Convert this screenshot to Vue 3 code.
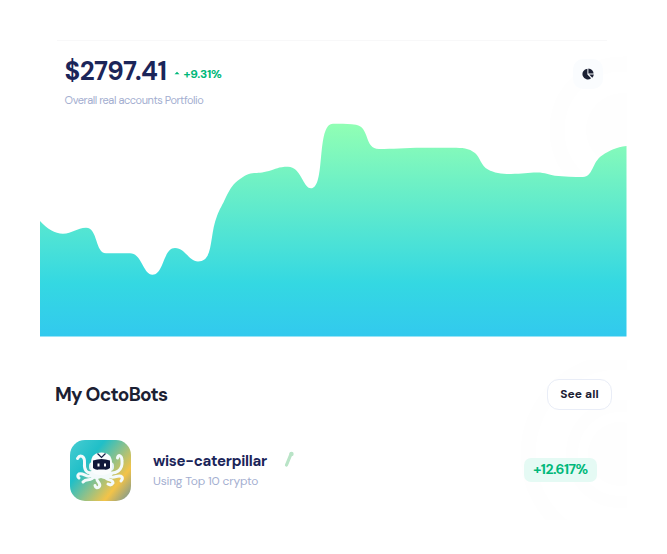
<script setup>
const balance = '$2797.41'
const change = '+9.31%'
const bot = { name: 'wise-caterpillar', strategy: 'Using Top 10 crypto', profit: '+12.617%' }
</script>

<template>
  <main class="page">
    <section class="portfolio">
      <svg class="rings" viewBox="0 0 80 150" aria-hidden="true">
        <circle cx="76" cy="75" r="66" fill="none" stroke="#fefefe" stroke-width="15" />
        <circle cx="76" cy="75" r="37" fill="#fefefe" />
      </svg>
      <header class="summary">
        <div class="figures">
          <div class="amount-row">
            <span class="amount">{{ balance }}</span>
            <svg class="caret" viewBox="0 0 6 4"><path d="M.5 3.3L3 .8L5.500 3.300Z" fill="#00b87a" /></svg>
            <span class="change">{{ change }}</span>
          </div>
          <p class="caption">Overall real accounts Portfolio</p>
        </div>
        <button class="pie" aria-label="Distribution">
          <svg viewBox="0 0 12 12" fill="#1b2033">
            <path d="M5.400 .8V6.400L9.100 10.200A5.300 5.300 0 1 1 5.400 .8Z" />
            <path d="M6.400 .4A5.400 5.400 0 0 1 11.600 5.600H6.400Z" />
            <path d="M7.200 6.600H11.800A5 5 0 0 1 10.300 9.700Z" />
          </svg>
        </button>
      </header>
      <svg class="chart" viewBox="40 118 587 219">
        <defs>
          <linearGradient id="area" gradientUnits="userSpaceOnUse" x1="0" y1="123" x2="0" y2="337">
            <stop offset="0" stop-color="#91ffb4" />
            <stop offset=".75" stop-color="#34d8e2" />
            <stop offset="1" stop-color="#32c9ee" />
          </linearGradient>
        </defs>
        <path fill="url(#area)" d="M40 221C47 229 55 233.7 63 233.7C72 233.7 77 227.7 86 227.7C98 227.7 95 253.3 106 253.3H130C142 253.3 143 274.7 152.500 274.700C164 274.700 163 248 175 248C185 248 189 261.500 198 261.500C214 261.500 209 236 217 216C220 208 222 206 226 197C231 187 233 184 240 179C252 170 254 175 269 171C276 169 278 166.700 288 166.700C301 166.700 303 188.300 311 188.300C326 188.300 316 123.700 333 123.700C341 123.500 349 123.700 356 124.700C370 127 364 149 379 149C393 149 404 147.700 423 147.700H453C462 147.700 469 148 475 153C480 157 481 166 488 169.500C494 173 502 174 511 174C522 174 528 172.600 537 172.600C546 172.600 548 175 555 175.800C564 176.700 574 177 583 177C593 177 592 162 602 155.500C610 150 616 147.500 626.500 146V336.500H40Z" />
      </svg>
    </section>

    <section class="bots">
      <svg class="rings" viewBox="0 0 110 160" aria-hidden="true">
        <circle cx="103" cy="94" r="92" fill="none" stroke="#fefefe" stroke-width="15" />
        <circle cx="103" cy="94" r="48" fill="none" stroke="#fefefe" stroke-width="12" />
        <circle cx="103" cy="94" r="32" fill="#fefefe" />
      </svg>
      <header class="bots-head">
        <h2>My OctoBots</h2>
        <button class="see-all">See all</button>
      </header>
      <article class="bot">
        <svg class="avatar" viewBox="0 0 61 61">
          <defs>
            <linearGradient id="tile" x1="0" y1=".1" x2="1" y2=".9">
              <stop offset="0" stop-color="#43cbd0" />
              <stop offset=".3" stop-color="#20bfc8" />
              <stop offset=".55" stop-color="#8fc18a" />
              <stop offset=".78" stop-color="#f3c348" />
              <stop offset="1" stop-color="#849c8c" />
            </linearGradient>
          </defs>
          <rect width="61" height="61" rx="15" fill="url(#tile)" />
          <g fill="none" stroke="#f3fafb" stroke-width="3" stroke-linecap="round" stroke-linejoin="round">
            <path d="M24 32C16 35 14 29 14.500 23C15 16 10 14 7.500 18.500" />
            <path d="M37 32C46 35 53 30 52 21C52 15 48 14 47.500 18" />
            <path d="M24 34C17 40 14 32 9 34Q6.500 36 9 38" />
            <path d="M25 35C21 43 17 37 13 42" />
            <path d="M28 35C23 41 33 43 29 47Q26 49 25 45.500" />
            <path d="M34 35C36 42 43 38 43 43Q41 46 38 44" />
            <path d="M37 33C42 42 48 33 52 37Q53 39 51 41" />
          </g>
          <path d="M23 30H39L43 34Q39 41 31 38Q23 41 19 35Z" fill="#f3fafb" />
          <rect x="19" y="22" width="25" height="9" rx="4" fill="#e4f2f6" />
          <path d="M21 27V23C21 16 25 12.500 31.500 12.500S42 16 42 23V27C42 33 38 35 31.500 35S21 33 21 27Z" fill="#fafcfd" />
          <path d="M27.500 13.500L31.500 17.500L35.500 13.500" fill="none" stroke="#152247" stroke-width="1.200" />
          <path d="M23 20.500Q31.500 17.500 40 20.500V28Q37 30.500 34.500 29.500H28.500Q26 30.500 23 28Z" fill="#101739" />
          <path d="M27.500 23.500H29.500V26.500H27.500ZM34 23.500H36V26.500H34Z" fill="#fff" />
        </svg>
        <div class="bot-info">
          <h3>{{ bot.name }}</h3>
          <p>{{ bot.strategy }}</p>
        </div>
        <svg class="marker" viewBox="0 0 12 18">
          <path d="M8 3L3.500 14" stroke="#b9e4c7" stroke-width="3.200" stroke-linecap="round" />
          <circle cx="8.500" cy="3" r="2.200" fill="#b9e4c7" />
        </svg>
        <span class="profit">{{ bot.profit }}</span>
      </article>
    </section>
  </main>
</template>

<style>
body { margin: 0; background: #fff; }
</style>

<style scoped>
* { box-sizing: border-box; }
h2, h3, p { margin: 0; }
.page {
  width: 667px;
  height: 554px;
  padding: 40px 40px 0;
  overflow: hidden;
  font-family: "DM Sans", Inter, "Liberation Sans", sans-serif;
  font-optical-sizing: none;
}
.portfolio, .bots { position: relative; width: 587px; }
.portfolio { height: 297px; }
.portfolio::before {
  content: "";
  display: block;
  height: 1px;
  margin: 0 20px 0 17px;
  background: #f8f8f9;
}
.rings { position: absolute; right: 0; }
.portfolio .rings { top: 15px; width: 80px; height: 150px; }
.bots .rings { top: 0; width: 110px; height: 160px; }
.summary {
  position: relative;
  display: flex;
  justify-content: space-between;
  height: 77px;
  padding: 13px 24px 0 24.6px;
}
.amount-row { display: flex; align-items: center; height: 34px; }
.amount {
  width: 108px;
  color: #1b2559;
  font-size: 26px;
  font-weight: 700;
  letter-spacing: -0.5px;
  white-space: nowrap;
}
.caret { width: 6px; height: 4px; margin: 3px 4px 0 1px; }
.change { margin-top: 5px; color: #00b87a; font-size: 12px; font-weight: 700; letter-spacing: -0.25px; }
.caption { margin-top: 4px; color: #a3aed0; font-size: 11px; line-height: 16px; letter-spacing: -0.45px; white-space: nowrap; }
button { font-family: inherit; padding: 0; }
.pie {
  display: grid;
  place-items: center;
  width: 30px;
  height: 30px;
  margin-top: 5px;
  border: 0;
  border-radius: 10px;
  background: #fafcfe;
}
.pie svg { width: 12px; height: 12px; }
.chart { position: relative; display: block; width: 587px; height: 219px; }
.bots { height: 160px; margin-top: 23px; padding: 19px 15px 0; }
.bots-head { position: relative; display: flex; justify-content: space-between; }
h2 { color: #1b2033; font-size: 19px; font-weight: 700; line-height: 31px; letter-spacing: -0.72px; }
.see-all {
  width: 65px;
  height: 31px;
  border: 1px solid #e9edf7;
  border-radius: 12px;
  background: #fff;
  color: #1b2033;
  font-size: 12px;
  font-weight: 700;
  line-height: 29px;
  letter-spacing: 0.1px;
}
.bot { position: relative; display: flex; align-items: center; padding: 30px 15px 0; }
.avatar { width: 61px; height: 61px; flex: none; }
.bot-info { width: 115px; margin-left: 22px; padding-top: 1px; }
h3 { color: #1b2559; font-size: 15px; font-weight: 700; line-height: 20px; letter-spacing: -0.27px; white-space: nowrap; }
.bot-info p { color: #a3aed0; font-size: 12px; line-height: 20px; letter-spacing: -0.2px; white-space: nowrap; }
.marker { width: 12px; height: 18px; margin: -21px 0 0 15px; }
.profit {
  width: 73px;
  height: 24px;
  margin: -1px 0 0 auto;
  border-radius: 7px;
  background: #e5faf4;
  color: #00b87a;
  font-size: 14px;
  font-weight: 700;
  line-height: 23px;
  text-align: center;
  letter-spacing: -0.5px;
}
</style>
